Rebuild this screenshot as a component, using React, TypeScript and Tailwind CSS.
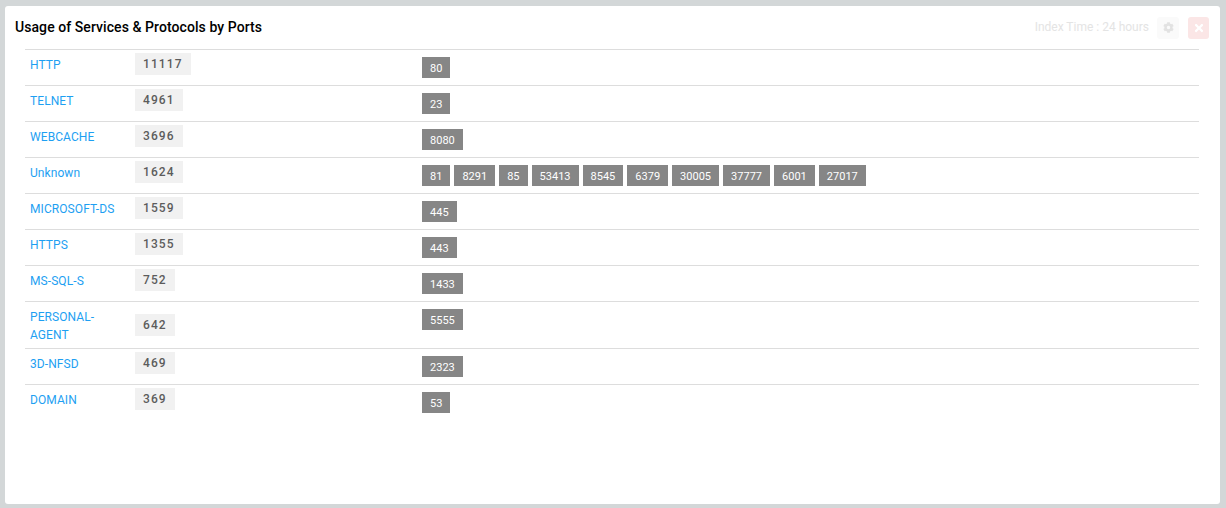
import { FaCog, FaTimes } from "react-icons/fa";

const rows: [string, string, string[]][] = [
  ["HTTP", "11117", ["80"]],
  ["TELNET", "4961", ["23"]],
  ["WEBCACHE", "3696", ["8080"]],
  ["Unknown", "1624", ["81", "8291", "85", "53413", "8545", "6379", "30005", "37777", "6001", "27017"]],
  ["MICROSOFT-DS", "1559", ["445"]],
  ["HTTPS", "1355", ["443"]],
  ["MS-SQL-S", "752", ["1433"]],
  ["PERSONAL-AGENT", "642", ["5555"]],
  ["3D-NFSD", "469", ["2323"]],
  ["DOMAIN", "369", ["53"]],
];

function Row({ name, count, ports }: { name: string; count: string; ports: string[] }) {
  const tall = name === "PERSONAL-AGENT";
  return (
    <div className={`flex border-t border-[#dddddd] ${tall ? "h-[47px]" : "h-[36px]"}`}>
      <div className="w-[110px] px-[5px] pt-[6px] text-[12px] leading-[18px] tracking-[0.08px] text-[#1e9ff2]">
        {name}
      </div>
      <div className={`w-[287px] ${tall ? "pt-[12px]" : "pt-[3px]"}`}>
        <div className="h-[22px] w-fit bg-[#f1f1f1] px-[8px] text-[12px] font-medium leading-[22px] tracking-[1.1px] text-[#5c5c5c]">
          {count}
        </div>
      </div>
      <div className="flex gap-[4px] pt-[7px]">
        {ports.map((p) => (
          <span key={p} className="h-[21px] bg-[#868686] px-[8px] text-[11px] font-[450] leading-[23px] tracking-[0.01px] text-white">
            {p}
          </span>
        ))}
      </div>
    </div>
  );
}

export default function App() {
  return (
    <div className="h-[508px] w-[1226px] overflow-hidden bg-[#d3d7d8] px-[5px] pt-[6px] pb-[4px] font-['Roboto',sans-serif]">
      <div className="h-[498px] w-[1215px] rounded-[3px] bg-white">
        <div className="flex h-[43px] items-center justify-between pl-[10px] pr-[11px]">
          <h1 className="text-[14px] font-medium tracking-[0.07px] text-black">Usage of Services &amp; Protocols by Ports</h1>
          <div className="flex items-center">
            <span className="pb-[2px] text-[12px] text-[#e4e4e4]">Index Time : 24 hours</span>
            <span className="ml-[8px] flex h-[22px] w-[22px] items-center justify-center rounded-[3px] bg-[#fafafa]">
              <FaCog className="text-[11px] text-[#e2e2e2]" />
            </span>
            <span className="ml-[9px] flex h-[22px] w-[21px] items-center justify-center rounded-[3px] bg-[#fbe6e6]">
              <FaTimes className="text-[12px] text-white" />
            </span>
          </div>
        </div>
        <div className="ml-[20px] w-[1174px]">
          {rows.map(([n, c, p]) => (
            <Row key={n} name={n} count={c} ports={p} />
          ))}
        </div>
      </div>
    </div>
  );
}
